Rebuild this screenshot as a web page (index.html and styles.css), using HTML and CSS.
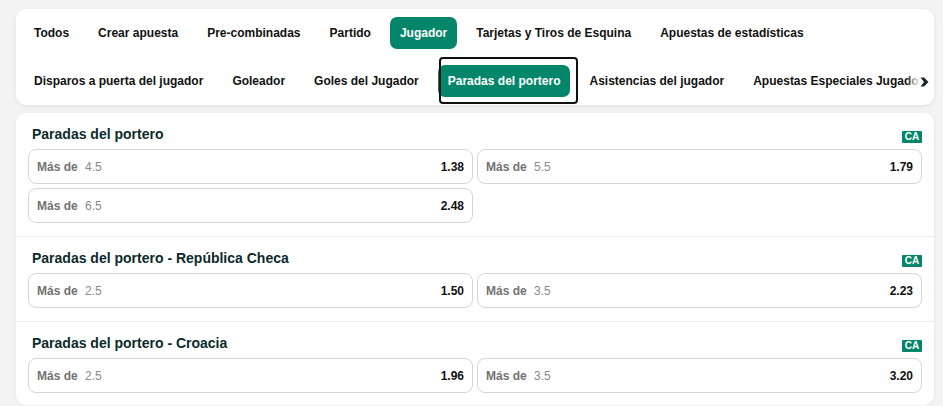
FILE: index.html
```html
<!DOCTYPE html>
<html lang="es">
<head>
<meta charset="utf-8">
<title>Paradas del portero</title>
<link rel="stylesheet" href="styles.css">
</head>
<body>
<div class="page">
  <nav class="tabs-card">
    <div class="tab-row">
      <button class="tab">Todos</button>
      <button class="tab">Crear apuesta</button>
      <button class="tab">Pre-combinadas</button>
      <button class="tab">Partido</button>
      <button class="tab active">Jugador</button>
      <button class="tab">Tarjetas y Tiros de Esquina</button>
      <button class="tab">Apuestas de estadísticas</button>
    </div>
    <div class="tab-row sub">
      <button class="tab">Disparos a puerta del jugador</button>
      <button class="tab">Goleador</button>
      <button class="tab">Goles del Jugador</button>
      <button class="tab active focused">Paradas del portero</button>
      <button class="tab">Asistencias del jugador</button>
      <button class="tab">Apuestas Especiales Jugador</button>
      <span class="scroll-arrow">
        <svg width="9" height="10" viewBox="0 0 9 10"><path d="M0.5 0.5 H4 L8.5 5 L4 9.5 H0.5 L4 5 Z" fill="#17272a"/></svg>
      </span>
    </div>
  </nav>

  <main class="markets">
    <section class="market">
      <header class="market-head">
        <h2 class="market-title">Paradas del portero</h2>
        <span class="badge">CA</span>
      </header>
      <div class="odds-grid">
        <button class="odd"><span class="odd-label"><b>Más de</b> 4.5</span><span class="odd-price">1.38</span></button>
        <button class="odd"><span class="odd-label"><b>Más de</b> 5.5</span><span class="odd-price">1.79</span></button>
        <button class="odd"><span class="odd-label"><b>Más de</b> 6.5</span><span class="odd-price">2.48</span></button>
      </div>
    </section>
    <section class="market">
      <header class="market-head">
        <h2 class="market-title">Paradas del portero - República Checa</h2>
        <span class="badge">CA</span>
      </header>
      <div class="odds-grid">
        <button class="odd"><span class="odd-label"><b>Más de</b> 2.5</span><span class="odd-price">1.50</span></button>
        <button class="odd"><span class="odd-label"><b>Más de</b> 3.5</span><span class="odd-price">2.23</span></button>
      </div>
    </section>
    <section class="market">
      <header class="market-head">
        <h2 class="market-title">Paradas del portero - Croacia</h2>
        <span class="badge">CA</span>
      </header>
      <div class="odds-grid">
        <button class="odd"><span class="odd-label"><b>Más de</b> 2.5</span><span class="odd-price">1.96</span></button>
        <button class="odd"><span class="odd-label"><b>Más de</b> 3.5</span><span class="odd-price">3.20</span></button>
      </div>
    </section>
  </main>
</div>
</body>
</html>
```

FILE: styles.css
```css
* { box-sizing: border-box; }

html, body {
  margin: 0;
  padding: 0;
  background: #f3f3f3;
  font-family: "Liberation Sans", Arial, sans-serif;
  overflow: hidden;
}

.page {
  padding: 9px 9px 0 16px;
  display: flex;
  flex-direction: column;
  gap: 8px;
}

.tabs-card {
  background: #fff;
  border-radius: 10px;
  box-shadow: 0 1px 4px rgba(0, 0, 0, 0.08);
  padding: 8px;
  display: flex;
  flex-direction: column;
  gap: 16px;
}

.tab-row {
  position: relative;
  display: flex;
  gap: 9px;
  overflow: hidden;
  height: 32px;
  align-items: center;
}

.tab {
  flex: 0 0 auto;
  position: relative;
  height: 32px;
  padding: 0 10px;
  border: none;
  border-radius: 7px;
  background: transparent;
  font-family: "Liberation Sans", Arial, sans-serif;
  font-size: 12px;
  font-weight: 700;
  color: #111;
  white-space: nowrap;
  cursor: pointer;
}

.tab.active {
  background: #03866a;
  color: #fff;
}

.sub {
  overflow: visible;
  clip-path: inset(-8px -4px -8px 0);
}

.tab.focused::after {
  content: "";
  position: absolute;
  top: -8px;
  bottom: -7px;
  left: 1px;
  right: -8px;
  border: 2px solid #111;
  border-radius: 4px;
}

.scroll-arrow {
  position: absolute;
  right: -3px;
  top: 0;
  bottom: 0;
  width: 22px;
  display: flex;
  align-items: center;
  justify-content: flex-end;
  background: linear-gradient(to right, rgba(255, 255, 255, 0) 0%, rgba(255, 255, 255, 0.6) 30%, #fff 62%);
}

.scroll-arrow svg {
  margin-top: 1px;
}

.markets {
  background: #fff;
  border-radius: 10px;
  box-shadow: 0 1px 4px rgba(0, 0, 0, 0.06);
}

.market {
  padding: 10px 12px 13px 12px;
  border-top: 1px solid #ececec;
}

.market:first-child {
  border-top: none;
}

.market:last-child {
  padding-bottom: 12px;
}

.market-head {
  display: flex;
  justify-content: space-between;
  align-items: flex-start;
  height: 20px;
  margin: 0 0 6px 0;
}

.market-title {
  margin: 0 0 0 4px;
  font-size: 14px;
  line-height: 22px;
  font-weight: 700;
  color: #0c2a2c;
}

.badge {
  margin-top: 8px;
  width: 20px;
  height: 12px;
  border-radius: 1px;
  background: #03866a;
  color: #fff;
  font-size: 10px;
  font-weight: 700;
  line-height: 12px;
  text-align: center;
}

.odds-grid {
  display: grid;
  grid-template-columns: 1fr 1fr;
  gap: 4px;
}

.odd {
  display: flex;
  justify-content: space-between;
  align-items: center;
  height: 35px;
  padding: 0 8px 0 8px;
  border: 1px solid #d6d6d6;
  border-radius: 8px;
  background: #fff;
  font-family: "Liberation Sans", Arial, sans-serif;
  font-size: 12px;
  cursor: pointer;
}

.odd-label {
  color: #8a8a8a;
  white-space: pre;
}

.odd-label b {
  color: #727272;
  font-weight: 700;
  margin-right: 4px;
}

.odd-price {
  color: #111;
  font-weight: 700;
}
```
